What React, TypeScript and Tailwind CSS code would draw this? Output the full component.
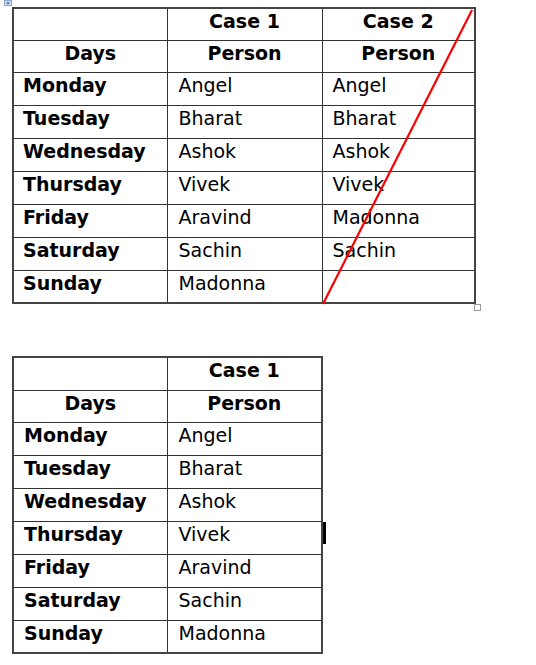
import React from 'react'

const CASE1 = [
  ['Monday', 'Angel'],
  ['Tuesday', 'Bharat'],
  ['Wednesday', 'Ashok'],
  ['Thursday', 'Vivek'],
  ['Friday', 'Aravind'],
  ['Saturday', 'Sachin'],
  ['Sunday', 'Madonna'],
]

const CASE2 = ['Angel', 'Bharat', 'Ashok', 'Vivek', 'Madonna', 'Sachin', '']

const cell = 'border border-[#333] align-top p-0 pt-[1px] leading-[22px]'

export default function App() {
  return (
    <div
      className="relative w-[536px] h-[665px] bg-white text-black text-[19px]"
      style={{ fontFamily: '"DejaVu Sans", Verdana, sans-serif' }}
    >
      {/* table move handle */}
      <svg width="8" height="6" viewBox="0 0 8 6" className="absolute left-[4px] top-0">
        <rect x="0.5" y="0.5" width="7" height="5" fill="#dfe8f5" stroke="#8aa3c8" />
        <path d="M2 3h4M4 1.5v3" stroke="#3b6cc4" strokeWidth="1" />
      </svg>

      <div className="pt-[7px] pl-[12px]">
        {/* Case 1 + Case 2 */}
        <div className="relative w-[462px]">
          <table className="border-collapse table-fixed w-[462px] border-2 border-[#444]">
            <colgroup>
              <col className="w-[154px]" />
              <col className="w-[155px]" />
              <col className="w-[153px]" />
            </colgroup>
            <tbody>
              <tr className="h-[32px]">
                <td className={cell}></td>
                <td className={`${cell} text-center font-bold`}>Case 1</td>
                <td className={`${cell} text-center font-bold`}>Case 2</td>
              </tr>
              <tr className="h-[32px]">
                <td className={`${cell} text-center font-bold`}>Days</td>
                <td className={`${cell} text-center font-bold`}>Person</td>
                <td className={`${cell} text-center font-bold`}>Person</td>
              </tr>
              {CASE1.map(([day, person], i) => (
                <tr key={day} className="h-[33px]">
                  <td className={`${cell} pl-[9px] font-bold`}>{day}</td>
                  <td className={`${cell} pl-[11px]`}>{person}</td>
                  <td className={`${cell} pl-[10px]`}>{CASE2[i]}</td>
                </tr>
              ))}
            </tbody>
          </table>
          {/* red strike-through over Case 2 */}
          <svg className="absolute left-0 top-0 pointer-events-none" width="470" height="300">
            <line x1="460" y1="3" x2="311" y2="297" stroke="#ff0000" strokeWidth="2.2" />
          </svg>
          {/* resize handle */}
          <div className="absolute right-[-7px] bottom-[-7px] w-[7px] h-[7px] border border-[#999] bg-white" />
        </div>

        {/* Case 1 only */}
        <div className="relative w-[309px] mt-[52px]">
          <table className="border-collapse table-fixed w-[309px] border-2 border-[#444]">
            <colgroup>
              <col className="w-[154px]" />
              <col className="w-[155px]" />
            </colgroup>
            <tbody>
              <tr className="h-[33px]">
                <td className={cell}></td>
                <td className={`${cell} text-center font-bold`}>Case 1</td>
              </tr>
              <tr className="h-[32px]">
                <td className={`${cell} text-center font-bold`}>Days</td>
                <td className={`${cell} text-center font-bold`}>Person</td>
              </tr>
              {CASE1.map(([day, person]) => (
                <tr key={day} className="h-[33px]">
                  <td className={`${cell} pl-[10px] font-bold`}>{day}</td>
                  <td className={`${cell} pl-[11px]`}>{person}</td>
                </tr>
              ))}
            </tbody>
          </table>
          {/* text caret */}
          <div className="absolute left-[311px] top-[166px] w-[3px] h-[22px] bg-black" />
        </div>
      </div>
    </div>
  )
}
